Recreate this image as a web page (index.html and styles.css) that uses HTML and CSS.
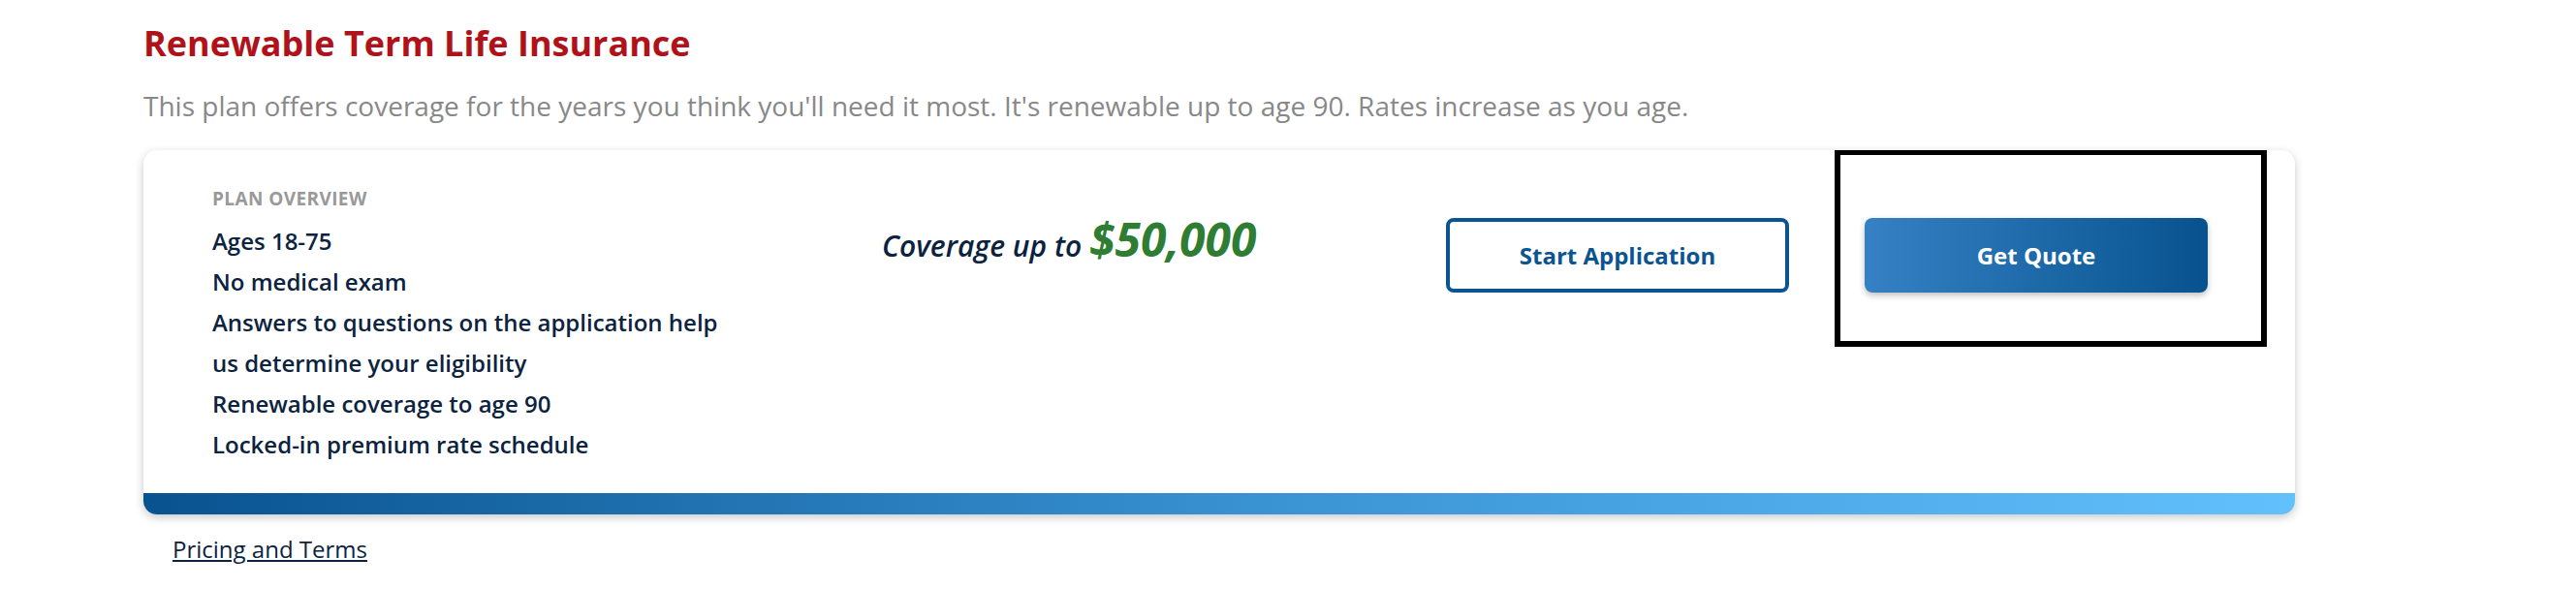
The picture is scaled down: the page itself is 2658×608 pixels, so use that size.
FILE: index.html
```html
<!DOCTYPE html>
<html lang="en">
<head>
<meta charset="utf-8">
<title>Renewable Term Life Insurance</title>
<link rel="stylesheet" href="styles.css">
</head>
<body>
<main class="page">
  <h2 class="title">Renewable Term Life Insurance</h2>
  <p class="desc">This plan offers coverage for the years you think you'll need it most. It's renewable up to age 90. Rates increase as you age.</p>
  <section class="card">
    <div class="card-body">
      <div class="overview">
        <div class="label">PLAN OVERVIEW</div>
        <ul class="features">
          <li>Ages 18-75</li>
          <li>No medical exam</li>
          <li>Answers to questions on the application help us determine your eligibility</li>
          <li>Renewable coverage to age 90</li>
          <li>Locked-in premium rate schedule</li>
        </ul>
      </div>
      <div class="coverage">Coverage up to <span class="amount">$50,000</span></div>
      <div class="start-col">
        <button class="btn btn-outline">Start Application</button>
      </div>
      <div class="quote-col">
        <button class="btn btn-primary">Get Quote</button>
      </div>
    </div>
    <div class="card-bar"></div>
  </section>
  <a class="terms" href="#">Pricing and Terms</a>
</main>
</body>
</html>
```

FILE: styles.css
```css
* { box-sizing: border-box; }
html, body { margin: 0; padding: 0; background: #ffffff; }
body { font-family: "Open Sans", "Noto Sans", Arial, sans-serif; }

.page {
  padding: 21px 0 0 148px;
  width: 2658px;
}

.title {
  margin: 0;
  font-size: 36px;
  line-height: 48px;
  font-weight: 700;
  color: #b0121a;
}

.desc {
  margin: 21px 0 0 0;
  font-size: 28px;
  line-height: 38px;
  color: #888888;
}

.card {
  margin-top: 27px;
  width: 2220px;
  background: #fff;
  border-radius: 14px;
  box-shadow: 0 3px 10px rgba(0, 0, 0, 0.22);
  overflow: hidden;
}

.card-body {
  display: flex;
  align-items: flex-start;
  padding: 0 0 0 71px;
}

.overview {
  width: 691px;
  padding: 38px 0 29px 0;
}

.label {
  font-size: 19px;
  line-height: 25px;
  font-weight: 700;
  color: #999999;
  letter-spacing: 0.4px;
  margin-bottom: 10px;
}

.features {
  list-style: none;
  margin: 0;
  padding: 0;
  width: 540px;
}

.features li {
  font-size: 24px;
  line-height: 42px;
  font-weight: 600;
  color: #0c2340;
}

.coverage {
  width: 582px;
  padding-top: 62px;
  font-size: 30px;
  line-height: 60px;
  font-style: italic;
  font-weight: 600;
  color: #0c2340;
}

.amount {
  font-size: 48px;
  font-weight: 700;
  color: #2e7d32;
}

.start-col {
  padding-top: 70px;
}

.btn {
  font-family: inherit;
  font-weight: 700;
  font-size: 24px;
  width: 354px;
  height: 77px;
  border-radius: 8px;
  cursor: pointer;
}

.btn-outline {
  background: #fff;
  border: 4px solid #0a5591;
  color: #0a5591;
}

.quote-col {
  margin: 5px 0 0 53px;
  width: 434px;
  height: 192px;
  padding: 65px 0 0 25px;
  outline: 6px solid #000;
}

.btn-primary {
  border: none;
  color: #fff;
  background: linear-gradient(90deg, #3581c4 0%, #07528e 100%);
  box-shadow: 0 3px 6px rgba(0, 0, 0, 0.25);
}

.card-bar {
  height: 22px;
  background: linear-gradient(90deg, #08528f 0%, #3c96d6 55%, #62c0fc 100%);
}

.terms {
  display: inline-block;
  margin: 20px 0 0 30px;
  font-size: 24px;
  line-height: 32px;
  color: #0c2340;
  text-decoration: underline;
}
```
